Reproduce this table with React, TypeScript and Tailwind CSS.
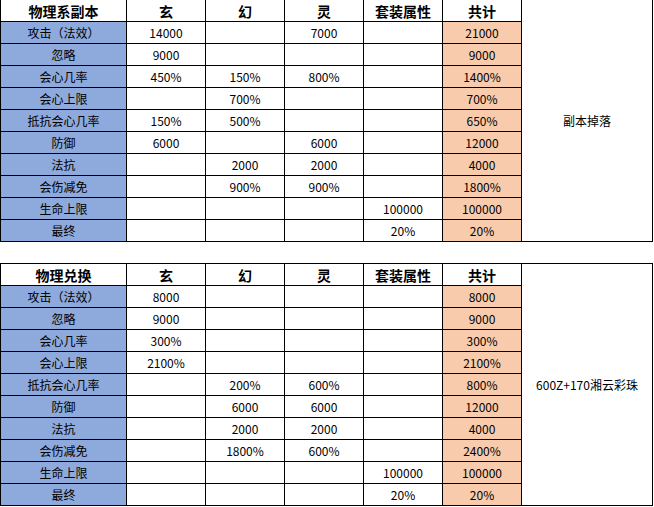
import React from "react";

type Row = [string, string, string, string, string, string];

const t1: Row[] = [
  ["攻击（法效）", "14000", "", "7000", "", "21000"],
  ["忽略", "9000", "", "", "", "9000"],
  ["会心几率", "450%", "150%", "800%", "", "1400%"],
  ["会心上限", "", "700%", "", "", "700%"],
  ["抵抗会心几率", "150%", "500%", "", "", "650%"],
  ["防御", "6000", "", "6000", "", "12000"],
  ["法抗", "", "2000", "2000", "", "4000"],
  ["会伤减免", "", "900%", "900%", "", "1800%"],
  ["生命上限", "", "", "", "100000", "100000"],
  ["最终", "", "", "", "20%", "20%"],
];

const t2: Row[] = [
  ["攻击（法效）", "8000", "", "", "", "8000"],
  ["忽略", "9000", "", "", "", "9000"],
  ["会心几率", "300%", "", "", "", "300%"],
  ["会心上限", "2100%", "", "", "", "2100%"],
  ["抵抗会心几率", "", "200%", "600%", "", "800%"],
  ["防御", "", "6000", "6000", "", "12000"],
  ["法抗", "", "2000", "2000", "", "4000"],
  ["会伤减免", "", "1800%", "600%", "", "2400%"],
  ["生命上限", "", "", "", "100000", "100000"],
  ["最终", "", "", "", "20%", "20%"],
];

function Table({ title, note, rows, top }: { title: string; note: string; rows: Row[]; top: boolean }) {
  const headers = [title, "玄", "幻", "灵", "套装属性", "共计"];
  return (
    <div
      className={`grid w-[653px] grid-cols-[125px_78px_78px_78px_78px_78px_130px] auto-rows-[21px] gap-px bg-black px-px pb-px ${top ? "pt-px" : "pt-0"}`}
    >
      {headers.map((h, i) => (
        <div key={"h" + i} className="flex items-center justify-center bg-white text-[14px] font-bold leading-none">
          {h}
        </div>
      ))}
      <div className="row-span-11 flex items-center justify-center bg-white text-[12px] leading-none [grid-column:7] [grid-row:1/span_11]">
        {note}
      </div>
      {rows.map((r, ri) =>
        r.map((c, ci) => (
          <div
            key={ri + "-" + ci}
            className={`flex items-center justify-center text-[12px] leading-none ${
              ci === 0 ? "bg-[#8EA9DB]" : ci === 5 ? "bg-[#F8CBAD]" : "bg-white"
            }`}
          >
            {c}
          </div>
        ))
      )}
    </div>
  );
}

export default function App() {
  return (
    <div className="w-[654px] h-[507px] bg-white text-black overflow-hidden" style={{ fontFamily: '"Noto Sans CJK SC", "Noto Sans", sans-serif' }}>
      <Table title="物理系副本" note="副本掉落" rows={t1} top={false} />
      <div className="h-[21px]" />
      <Table title="物理兑换" note="600Z+170湘云彩珠" rows={t2} top={true} />
    </div>
  );
}
